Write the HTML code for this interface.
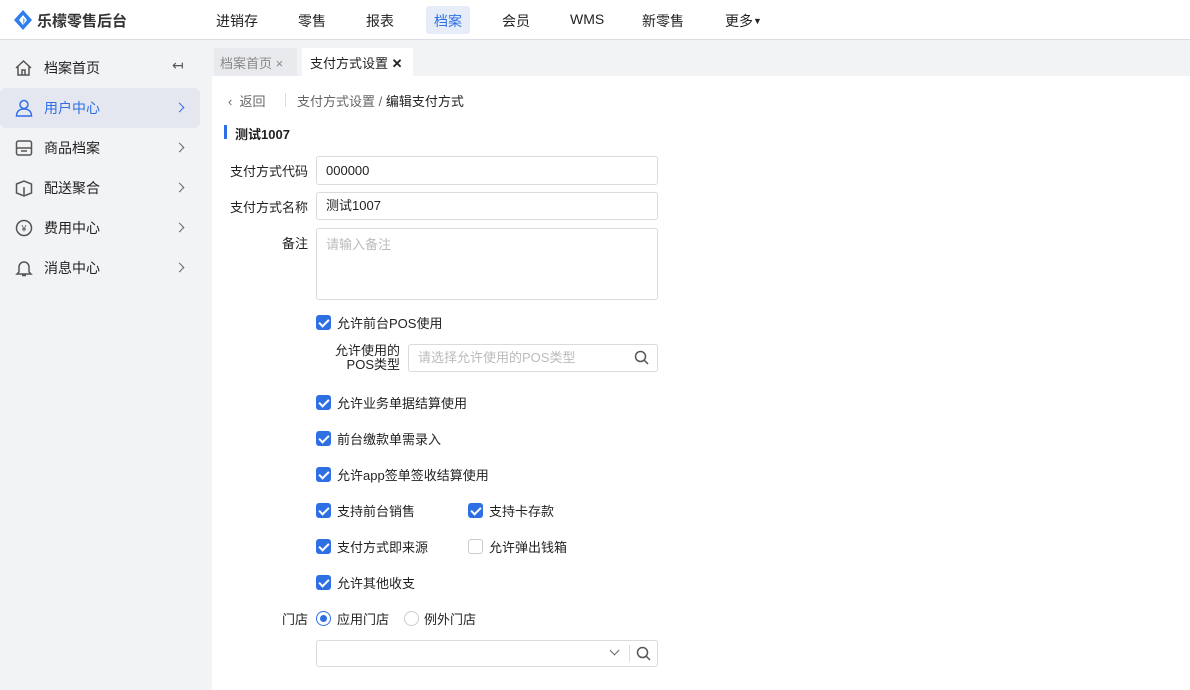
<!DOCTYPE html><html><head><meta charset="utf-8"><style>
*{box-sizing:border-box;margin:0;padding:0}
body{width:1190px;height:690px;overflow:hidden;font-family:"Liberation Sans","Noto Sans CJK SC",sans-serif;font-size:13px;color:#222;background:#fff;position:relative}
.a{position:absolute;white-space:nowrap}
.hdr{position:absolute;left:0;top:0;width:1190px;height:40px;border-bottom:1px solid #dcdde0;background:#fff}
.side{position:absolute;left:0;top:40px;width:212px;height:650px;background:#f2f3f5}
.tabs{position:absolute;left:212px;top:40px;width:978px;height:36px;background:#f2f3f5}
.inp{position:absolute;left:316px;width:342px;border:1px solid #d9dadd;border-radius:3px;background:#fff;padding-left:9px}
.lbl{position:absolute;width:100px;left:208px;text-align:right;font-size:13px}
.cb{position:absolute;width:15px;height:15px;border-radius:3px;background:#2f6fe4}
.cb:after{content:"";position:absolute;left:5px;top:2px;width:4px;height:8px;border:solid #fff;border-width:0 2px 2px 0;transform:rotate(45deg)}
.cbo{position:absolute;width:15px;height:15px;border-radius:3px;border:1px solid #ccc;background:#fff}
.ct{position:absolute;font-size:13px;margin-top:-2px}
.nav{position:absolute;top:11px;font-size:14px}
.si{position:absolute;left:44px;font-size:14px;margin-top:-2px}
.ar{position:absolute;left:176px;width:7px;height:7px;border:solid #666;border-width:1.5px 1.5px 0 0;transform:rotate(45deg)}
</style></head><body>
<div class="hdr"></div>
<svg class="a" style="left:14px;top:10px" width="18" height="20" viewBox="0 0 18 20"><path d="M9 0L18 10L9 20L0 10Z" fill="#2f7ef0"/><path d="M9 5L13 10L9 15L5 10Z" fill="#fff"/><path d="M9 8L11 10L9 15Z" fill="#56c0f5"/></svg>
<div class="a" style="left:37px;top:10px;font-size:15px;font-weight:bold;color:#333">乐檬零售后台</div>
<div class="nav" style="left:216px">进销存</div>
<div class="nav" style="left:298px">零售</div>
<div class="nav" style="left:366px">报表</div>
<div class="a" style="left:426px;top:6px;width:44px;height:28px;background:#e6edf9;border-radius:3px"></div>
<div class="nav" style="left:434px;color:#2f6fe4">档案</div>
<div class="nav" style="left:502px">会员</div>
<div class="nav" style="left:570px">WMS</div>
<div class="nav" style="left:642px">新零售</div>
<div class="nav" style="left:725px">更多<span style="font-size:9px;vertical-align:2px">▼</span></div>
<div class="side"></div>
<div class="a" style="left:0;top:88px;width:200px;height:40px;background:#e4e7f0;border-radius:6px"></div>
<svg class="a" style="left:14px;top:59px" width="19" height="18" viewBox="0 0 19 18" fill="none" stroke="#555" stroke-width="1.5"><path d="M2 9L9.5 2L17 9M4 7V16H15V7M8 16V11H11V16"/></svg>
<div class="si" style="top:60px">档案首页</div>
<div class="a" style="left:172px;top:57px;font-size:14px;color:#555">↤</div>
<svg class="a" style="left:15px;top:99px" width="18" height="18" viewBox="0 0 18 18" fill="none" stroke="#2f6fe4" stroke-width="1.5"><circle cx="9" cy="5.5" r="4"/><path d="M1.5 17C1.5 12 5 10 9 10S16.5 12 16.5 17Z"/></svg>
<div class="si" style="top:100px;color:#2f6fe4">用户中心</div>
<div class="ar" style="top:104px;border-color:#2f6fe4"></div>
<svg class="a" style="left:15px;top:139px" width="18" height="18" viewBox="0 0 18 18" fill="none" stroke="#555" stroke-width="1.5"><rect x="1.5" y="2" width="15" height="14" rx="2"/><path d="M1.5 9H16.5M6 12H12"/></svg>
<div class="si" style="top:140px">商品档案</div><div class="ar" style="top:144px"></div>
<svg class="a" style="left:15px;top:179px" width="18" height="18" viewBox="0 0 18 18" fill="none" stroke="#555" stroke-width="1.5"><path d="M1.5 5L9 2L16.5 5V14L9 17L1.5 14Z M9 8V17"/></svg>
<div class="si" style="top:180px">配送聚合</div><div class="ar" style="top:184px"></div>
<svg class="a" style="left:15px;top:219px" width="18" height="18" viewBox="0 0 18 18" fill="none" stroke="#555" stroke-width="1.5"><circle cx="9" cy="9" r="7.5"/><text x="9" y="12.5" font-size="9" text-anchor="middle" fill="#555" stroke="none">¥</text></svg>
<div class="si" style="top:220px">费用中心</div><div class="ar" style="top:224px"></div>
<svg class="a" style="left:15px;top:259px" width="18" height="18" viewBox="0 0 18 18" fill="none" stroke="#555" stroke-width="1.5"><path d="M4 13V8A5 5 0 0 1 14 8V13L16 15H2Z M7 16.5H11"/></svg>
<div class="si" style="top:260px">消息中心</div><div class="ar" style="top:264px"></div>
<div class="tabs"></div>
<div class="a" style="left:214px;top:48px;width:83px;height:28px;background:#e9eaed"></div>
<div class="a" style="left:220px;top:53px;color:#888;font-size:13px">档案首页 ×</div>
<div class="a" style="left:302px;top:48px;width:111px;height:28px;background:#fff"></div>
<div class="a" style="left:310px;top:53px;font-size:13px">支付方式设置 <b>✕</b></div>
<div class="a" style="left:228px;top:91px;color:#666">‹&nbsp; 返回</div>
<div class="a" style="left:285px;top:93px;width:1px;height:14px;background:#ddd"></div>
<div class="a" style="left:297px;top:91px;color:#666">支付方式设置 / <span style="color:#222">编辑支付方式</span></div>
<div class="a" style="left:224px;top:125px;width:3px;height:14px;background:#2f6fe4"></div>
<div class="a" style="left:235px;top:124px;font-weight:bold">测试1007</div>
<div class="lbl" style="top:161px">支付方式代码</div>
<div class="inp" style="top:156px;height:29px;line-height:27px">000000</div>
<div class="lbl" style="top:197px">支付方式名称</div>
<div class="inp" style="top:192px;height:28px;line-height:26px">测试1007</div>
<div class="lbl" style="top:233px">备注</div>
<div class="inp" style="top:228px;height:72px;padding-top:5px;color:#bbb">请输入备注</div>
<div class="cb" style="left:316px;top:315px"></div><div class="ct" style="left:337px;top:315px">允许前台POS使用</div>
<div class="a" style="left:320px;top:344px;width:80px;text-align:right;line-height:14px">允许使用的<br>POS类型</div>
<div class="inp" style="left:408px;width:250px;top:344px;height:28px;line-height:26px;color:#bbb">请选择允许使用的POS类型</div>
<svg class="a" style="left:634px;top:350px" width="15" height="15" viewBox="0 0 15 15" fill="none" stroke="#555" stroke-width="1.5"><circle cx="6.5" cy="6.5" r="5"/><path d="M10 10L14 14"/></svg>
<div class="cb" style="left:316px;top:395px"></div><div class="ct" style="left:337px;top:395px">允许业务单据结算使用</div>
<div class="cb" style="left:316px;top:431px"></div><div class="ct" style="left:337px;top:431px">前台缴款单需录入</div>
<div class="cb" style="left:316px;top:467px"></div><div class="ct" style="left:337px;top:467px">允许app签单签收结算使用</div>
<div class="cb" style="left:316px;top:503px"></div><div class="ct" style="left:337px;top:503px">支持前台销售</div>
<div class="cb" style="left:468px;top:503px"></div><div class="ct" style="left:489px;top:503px">支持卡存款</div>
<div class="cb" style="left:316px;top:539px"></div><div class="ct" style="left:337px;top:539px">支付方式即来源</div>
<div class="cbo" style="left:468px;top:539px"></div><div class="ct" style="left:489px;top:539px">允许弹出钱箱</div>
<div class="cb" style="left:316px;top:575px"></div><div class="ct" style="left:337px;top:575px">允许其他收支</div>
<div class="lbl" style="top:609px">门店</div>
<div class="a" style="left:316px;top:611px;width:15px;height:15px;border-radius:50%;border:1px solid #2f6fe4"><div style="margin:3px;width:7px;height:7px;border-radius:50%;background:#2f6fe4"></div></div>
<div class="ct" style="left:337px;top:611px">应用门店</div>
<div class="a" style="left:404px;top:611px;width:15px;height:15px;border-radius:50%;border:1px solid #ccc"></div>
<div class="ct" style="left:424px;top:611px">例外门店</div>
<div class="inp" style="top:640px;height:27px"></div>
<div class="a" style="left:611px;top:647px;width:7px;height:7px;border:solid #666;border-width:0 1.5px 1.5px 0;transform:rotate(45deg)"></div>
<div class="a" style="left:629px;top:645px;width:1px;height:17px;background:#ddd"></div>
<svg class="a" style="left:636px;top:646px" width="15" height="15" viewBox="0 0 15 15" fill="none" stroke="#555" stroke-width="1.5"><circle cx="6.5" cy="6.5" r="5"/><path d="M10 10L14 14"/></svg>
</body></html>
